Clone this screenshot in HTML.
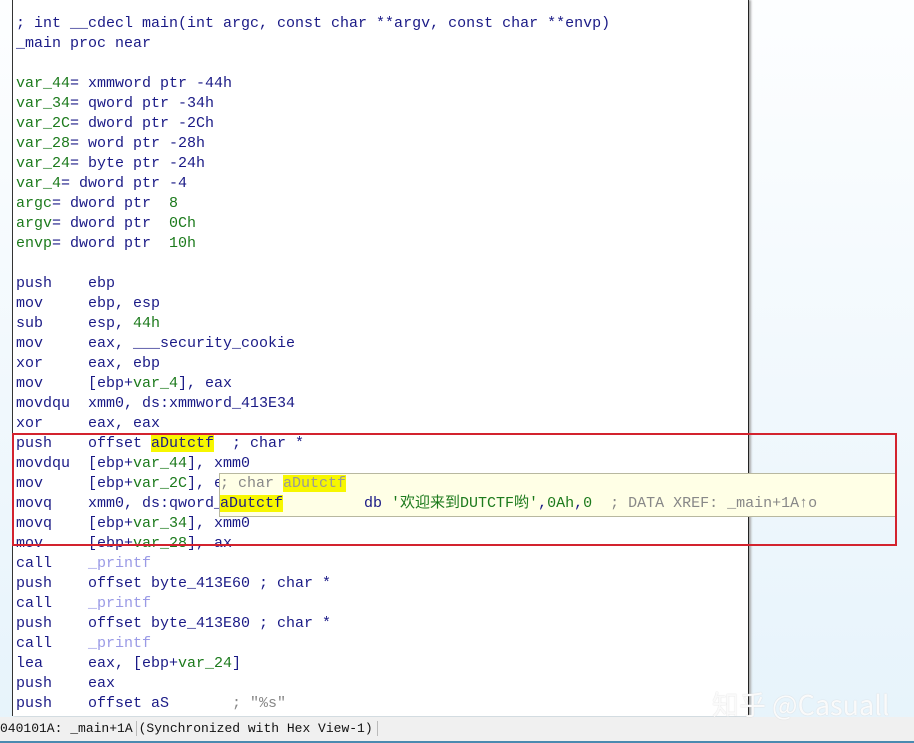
<!DOCTYPE html>
<html><head><meta charset="utf-8"><style>
body{margin:0;width:914px;height:743px;overflow:hidden;background:linear-gradient(#fdfeff,#e6f3fb);position:relative;font-family:"Liberation Mono","Noto Sans CJK SC",monospace;}
#panel{position:absolute;left:12px;top:0;width:735px;height:716px;background:#fff;border-left:1px solid #333;border-right:1px solid #222;box-shadow:2px 0 2px #aaa;}
.l{position:absolute;left:16px;height:20px;line-height:20px;font-size:15px;white-space:pre;color:#1a1a86;}
.g{color:#1c7a1c}.p{color:#9a9ae6}.c{color:#888}
.h{background:#f7f700}
#pop{position:absolute;left:219px;top:473px;width:676px;height:42px;background:#ffffe6;border:1px solid #b8b8a0;}
#red{position:absolute;left:12px;top:433px;width:881px;height:109px;border:2px solid #d3232e;}
#status{position:absolute;left:0;top:717px;width:914px;height:24px;background:#f0f0f0;border-bottom:2px solid #4a8ab0;font-family:"Liberation Mono",monospace;font-size:13px;line-height:24px;color:#111;white-space:pre;}
#wm{position:absolute;left:712px;top:686px;z-index:5;font-family:"Noto Sans CJK SC","Liberation Sans",sans-serif;font-size:27px;line-height:36px;color:rgba(255,255,255,0.9);text-shadow:0 0 1px #c8c8c8;white-space:nowrap;}
</style></head><body>
<div id="panel"></div>
<div class="l" style="top:14px">; int __cdecl main(int argc, const char **argv, const char **envp)</div>
<div class="l" style="top:34px">_main proc near</div>
<div class="l" style="top:74px"><span class="g">var_44</span>= xmmword ptr -44h</div>
<div class="l" style="top:94px"><span class="g">var_34</span>= qword ptr -34h</div>
<div class="l" style="top:114px"><span class="g">var_2C</span>= dword ptr -2Ch</div>
<div class="l" style="top:134px"><span class="g">var_28</span>= word ptr -28h</div>
<div class="l" style="top:154px"><span class="g">var_24</span>= byte ptr -24h</div>
<div class="l" style="top:174px"><span class="g">var_4</span>= dword ptr -4</div>
<div class="l" style="top:194px"><span class="g">argc</span>= dword ptr  <span class="g">8</span></div>
<div class="l" style="top:214px"><span class="g">argv</span>= dword ptr  <span class="g">0Ch</span></div>
<div class="l" style="top:234px"><span class="g">envp</span>= dword ptr  <span class="g">10h</span></div>
<div class="l" style="top:274px">push    ebp</div>
<div class="l" style="top:294px">mov     ebp, esp</div>
<div class="l" style="top:314px">sub     esp, <span class="g">44h</span></div>
<div class="l" style="top:334px">mov     eax, ___security_cookie</div>
<div class="l" style="top:354px">xor     eax, ebp</div>
<div class="l" style="top:374px">mov     [ebp+<span class="g">var_4</span>], eax</div>
<div class="l" style="top:394px">movdqu  xmm0, ds:xmmword_413E34</div>
<div class="l" style="top:414px">xor     eax, eax</div>
<div class="l" style="top:434px">push    offset <span class="h">aDutctf</span>  ; char *</div>
<div class="l" style="top:454px">movdqu  [ebp+<span class="g">var_44</span>], xmm0</div>
<div class="l" style="top:474px">mov     [ebp+<span class="g">var_2C</span>], eax</div>
<div class="l" style="top:494px">movq    xmm0, ds:qword_413E44</div>
<div class="l" style="top:514px">movq    [ebp+<span class="g">var_34</span>], xmm0</div>
<div class="l" style="top:534px">mov     [ebp+<span class="g">var_28</span>], ax</div>
<div class="l" style="top:554px">call    <span class="p">_printf</span></div>
<div class="l" style="top:574px">push    offset byte_413E60 ; char *</div>
<div class="l" style="top:594px">call    <span class="p">_printf</span></div>
<div class="l" style="top:614px">push    offset byte_413E80 ; char *</div>
<div class="l" style="top:634px">call    <span class="p">_printf</span></div>
<div class="l" style="top:654px">lea     eax, [ebp+<span class="g">var_24</span>]</div>
<div class="l" style="top:674px">push    eax</div>
<div class="l" style="top:694px">push    offset aS       <span class="c">; "%s"</span></div>
<div id="pop"></div>
<div class="l" style="top:474px;left:220px"><span class="c">; char </span><span class="h" style="color:#999">aDutctf</span></div>
<div class="l" style="top:494px;left:220px"><span class="h">aDutctf</span>         db <span class="g">'欢迎来到DUTCTF哟'</span>,<span class="g">0Ah</span>,<span class="g">0</span>  <span class="c">; DATA XREF: _main+1A↑o</span></div>
<div id="red"></div>
<div id="status">040101A: _main+1A<span style="border-left:1px solid #bbb;margin-left:3px;padding-left:2px">(Synchronized with Hex View-1)</span><span style="border-left:1px solid #bbb;margin-left:4px"></span></div>
<div id="wm">知乎 @Casuall</div>
</body></html>
